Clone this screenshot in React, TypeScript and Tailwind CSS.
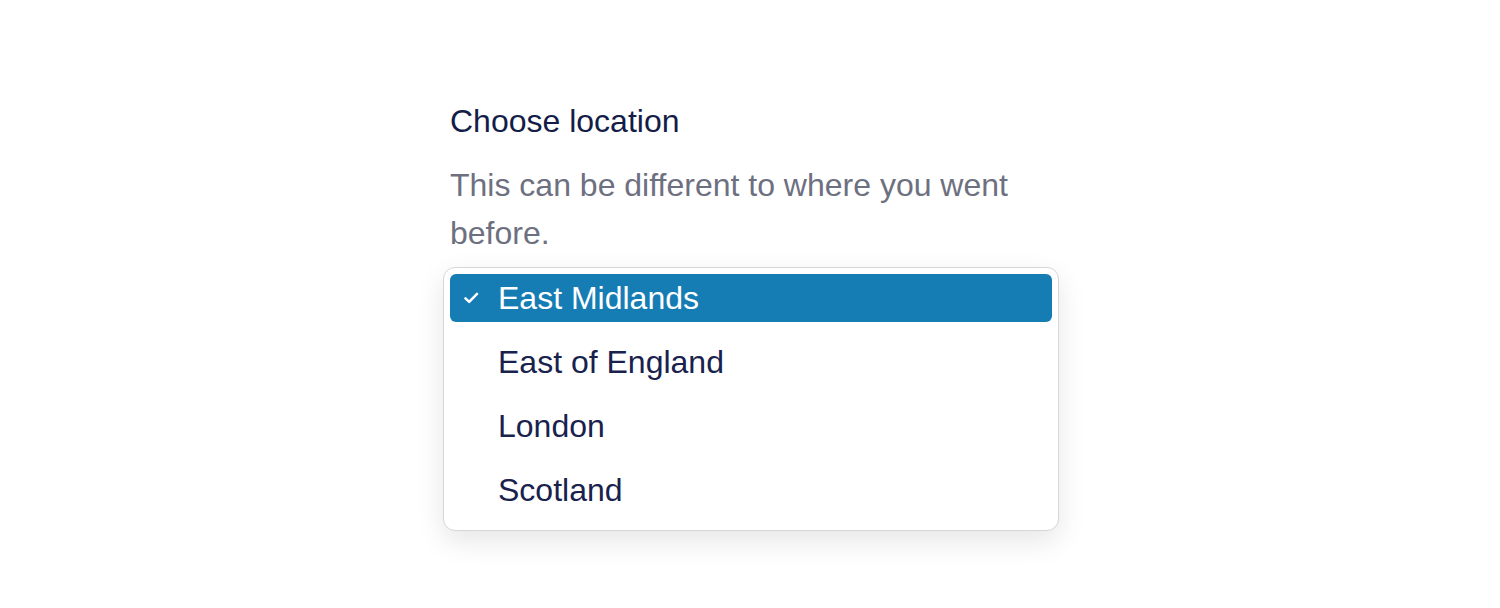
import React, { useState } from 'react'

const locations = ['East Midlands', 'East of England', 'London', 'Scotland']

const Check: React.FC = () => (
  <svg width="15" height="12" viewBox="0 0 15 12" fill="none" className="shrink-0">
    <path d="M1.5 6.4 L5.2 9.9 L13 1.9" stroke="white" strokeWidth="2.5" strokeLinecap="round" strokeLinejoin="round" />
  </svg>
)

const App: React.FC = () => {
  const [selected, setSelected] = useState('East Midlands')

  return (
    <div className="min-h-[608px] bg-white font-['Liberation_Sans',Arial,sans-serif]">
      <div className="mx-auto w-[600px] pt-[97px]">
        <p className="text-[32px] leading-[48px] text-[#141d47]">Choose location</p>
        <p className="mt-4 text-[32px] leading-[48px] text-[#6d7080]">
          This can be different to where you went before.
        </p>

        {/* Options popup */}
        <div className="-ml-[7px] mt-[10px] w-[616px] rounded-[12px] border border-[#d6d6d6] bg-white px-[6px] pt-[6px] pb-[16px] shadow-[0_10px_28px_rgba(0,0,0,0.10)]">
          <ul className="flex flex-col gap-4">
            {locations.map(loc => {
              const active = loc === selected
              return (
                <li
                  key={loc}
                  onClick={() => setSelected(loc)}
                  className={`flex h-12 cursor-default items-center rounded-[6px] ${
                    active ? 'bg-[#167db4] text-white' : 'text-[#18224d]'
                  }`}
                >
                  <span className="flex w-[48px] pl-[14px]">{active && <Check />}</span>
                  <span className="text-[32px] leading-[48px]">{loc}</span>
                </li>
              )
            })}
          </ul>
        </div>
      </div>
    </div>
  )
}

export default App
